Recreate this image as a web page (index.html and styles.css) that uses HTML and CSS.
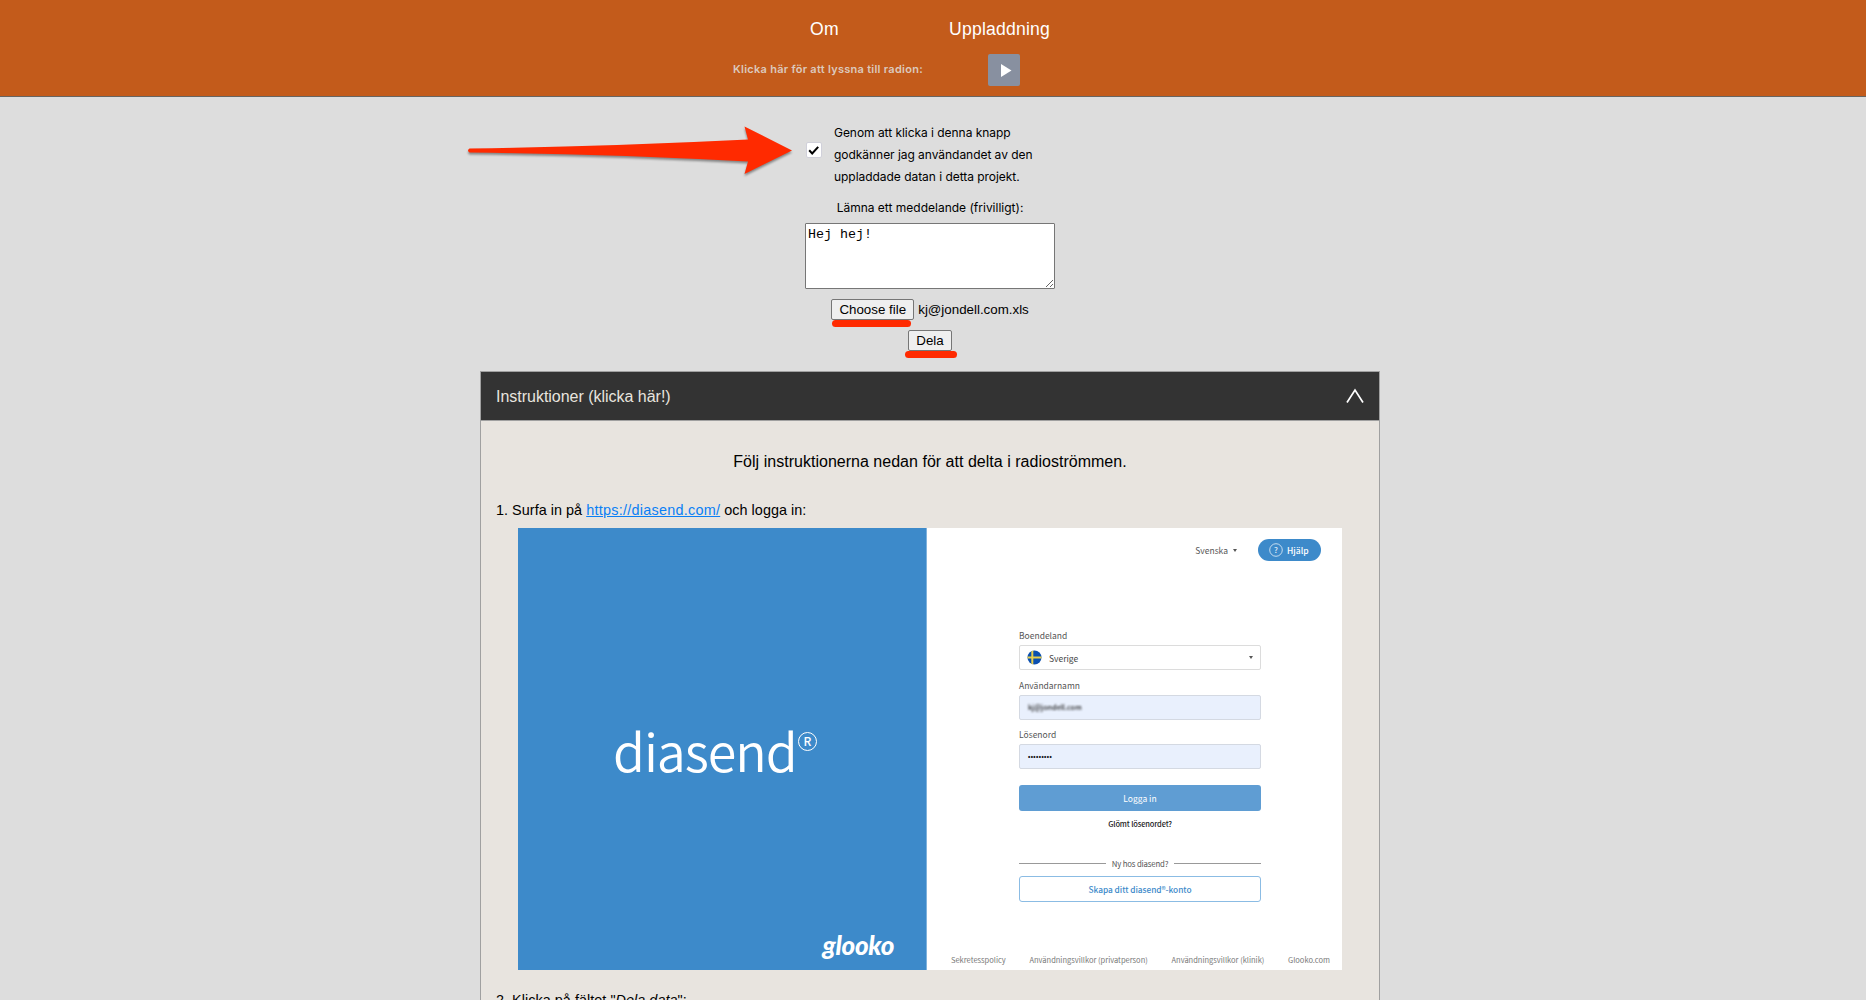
FILE: index.html
```html
<!DOCTYPE html>
<html lang="sv">
<head>
<meta charset="utf-8">
<title>Uppladdning</title>
<link rel="stylesheet" href="styles.css">
</head>
<body>
<header class="top">
  <nav class="nav"><a class="nav-about">Om</a><a class="nav-upload">Uppladdning</a></nav>
  <div class="radio">
    <span class="radio-text">Klicka här för att lyssna till radion:</span>
    <button class="play" aria-label="Play"><svg width="32" height="32" viewBox="0 0 32 32"><path d="M13 10v13l10.500-6.500z" fill="#fff"/></svg></button>
  </div>
</header>
<main>
  <form class="upload">
    <div class="consent">
      <span class="check"><svg width="16" height="16" viewBox="0 0 16 16"><path d="M3.200 8.300l3 3.200 6-6.700" fill="none" stroke="#000" stroke-width="2"/></svg></span>
      <p class="consent-text">Genom att klicka i denna knapp<br>godkänner jag användandet av den<br>uppladdade datan i detta projekt.</p>
      <svg class="arrow" width="340" height="64" viewBox="0 0 340 64"><path d="M11.500 22.500Q150 20.500 290 13.500L286.500 0.500L334 24.500L286.500 48L290 35.500Q150 28 11.500 26.500Q8.500 24.500 11.500 22.500Z" fill="#ff2a00"/></svg>
    </div>
    <label class="msg-label">Lämna ett meddelande (frivilligt):</label>
    <textarea class="msg">Hej hej!</textarea>
    <div class="file-row"><span class="marked"><button type="button" class="btn choose">Choose file</button><i class="stroke stroke-file"></i></span><span class="filename">kj@jondell.com.xls</span></div>
    <div class="send-row"><span class="marked"><button type="button" class="btn send">Dela</button><i class="stroke stroke-send"></i></span></div>
  </form>
  <section class="panel">
    <div class="panel-head"><span class="panel-title">Instruktioner (klicka här!)</span><svg width="20" height="18" viewBox="0 0 20 18"><path d="M2 15.500L10 3l8 12.500" fill="none" stroke="#fff" stroke-width="1.700"/></svg></div>
    <div class="panel-body">
      <p class="intro">Följ instruktionerna nedan för att delta i radioströmmen.</p>
      <p class="step">1. Surfa in på <a class="link">https://diasend.com/</a> och logga in:</p>
      <div class="shot">
        <div class="brand">
          <div class="logo">diasend<svg width="21" height="21" viewBox="0 0 21 21"><circle cx="10.500" cy="10.500" r="9" fill="none" stroke="#fff" stroke-width="1"/><text class="reg" x="10.500" y="14.800" text-anchor="middle" fill="#fff">R</text></svg></div>
          <div class="glooko">glooko</div>
        </div>
        <div class="login">
          <div class="tools"><span class="lang">Svenska</span><i class="caret"></i><span class="help"><svg width="14" height="14" viewBox="0 0 14 14"><circle cx="7" cy="7" r="6.300" fill="none" stroke="#fff" stroke-width=".7"/><text class="q" x="7" y="10" text-anchor="middle" fill="#fff">?</text></svg><span>Hjälp</span></span></div>
          <div class="fields">
            <div class="label">Boendeland</div>
            <div class="input country"><svg width="15" height="15" viewBox="0 0 15 15"><clipPath id="flag"><circle cx="7.500" cy="7.500" r="7"/></clipPath><g clip-path="url(#flag)"><path fill="#0b50b0" d="M0 0h15v15H0z"/><path fill="#e8cf4c" d="M4.300 0h2v15h-2zM0 6.500h15v2H0z"/></g></svg><span>Sverige</span><i class="caret"></i></div>
            <div class="label">Användarnamn</div>
            <div class="input filled"><span class="hidden-name">kj@jondell.com</span></div>
            <div class="label">Lösenord</div>
            <div class="input filled"><span class="dots">•••••••••</span></div>
            <div class="login-btn">Logga in</div>
            <div class="forgot">Glömt lösenordet?</div>
            <div class="divider"><span>Ny hos diasend?</span></div>
            <div class="create">Skapa ditt diasend®-konto</div>
          </div>
          <div class="foot"><span>Sekretesspolicy</span><span>Användningsvillkor (privatperson)</span><span>Användningsvillkor (klinik)</span><span>Glooko.com</span></div>
        </div>
      </div>
      <p class="step step-two">2. Klicka på fältet "<em>Dela data</em>":</p>
    </div>
  </section>
</main>
</body>
</html>
```
FILE: styles.css
```css
* { box-sizing: border-box; }
html { overflow: hidden; height: 1000px; }
body { margin: 0; height: 1000px; overflow: hidden; background: #ddd; color: #000; font-family: "Liberation Sans", Arial, sans-serif; }
p { margin: 0; }
button { padding: 0; }
.top { height: 97px; background: #c35b1b; border-bottom: 1px solid #686460; padding-top: 16px; }
.nav { display: flex; height: 26px; line-height: 26px; font-size: 17.600px; color: #fff; padding-left: 810px; }
.nav-about { width: 139px; letter-spacing: .3px; }
.nav-upload { letter-spacing: .2px; }
.radio { display: flex; align-items: center; justify-content: space-between; width: 287px; height: 32px; margin: 12px 0 0 733px; }
.radio-text { font: 600 11px/30px Inter, sans-serif; letter-spacing: .27px; color: #dcc9bd; padding-bottom: 3px; }
.play { width: 32px; height: 32px; border: 0; border-radius: 2px; background: #8890a0; }
.play svg { display: block; }
.upload { display: flex; flex-direction: column; align-items: center; width: 250px; margin: 25px auto 0 805px; height: 249px; }
.consent { position: relative; display: flex; align-items: center; width: 100%; height: 66px; }
.check { width: 16px; height: 16px; margin: 0 12px 11px 1px; border: 1px solid #d0d0da; border-radius: 2px; background: #fff; }
.check svg { display: block; margin: -1px; }
.consent-text { font: 12px/22px Inter, sans-serif; letter-spacing: -.04px; white-space: nowrap; }
.arrow { position: absolute; left: -347px; top: 4px; filter: drop-shadow(0 2px 1px rgba(0,0,0,.4)); }
.msg-label { font: 12px/22px Inter, sans-serif; margin: 9px 0 4px; }
.msg { display: block; flex: none; width: 250px; height: 66px; padding: 3px 2px 2px; border: 1px solid #767676; border-radius: 1px; background: #fff; font: 13.333px "Liberation Mono", monospace; }
.file-row { display: flex; align-items: center; height: 21px; margin-top: 10px; font-size: 13.333px; }
.filename { margin-left: 4px; }
.send-row { height: 21px; margin-top: 10px; }
.marked { position: relative; display: block; height: 21px; }
.btn { display: block; height: 21px; border: 1px solid #767676; border-radius: 2px; background: #efefef; color: #000; font: 13.333px "Liberation Sans", Arial, sans-serif; }
.choose { width: 83px; }
.send { width: 44px; }
.stroke { position: absolute; height: 7px; border-radius: 4px; background: #ff2a00; }
.stroke-file { left: 1px; top: 21px; width: 79px; }
.stroke-send { left: -3px; top: 21px; width: 52px; }
.panel { width: 900px; margin-left: 480px; height: 629px; border: 1px solid #a0a0a0; border-bottom: 0; background: #e8e4df; }
.panel-head { display: flex; align-items: center; justify-content: space-between; height: 49px; padding: 0 14px 0 15px; background: #333; border-bottom: 1px solid #a0a0a0; }
.panel-title { color: #e8e4df; font-size: 16px; letter-spacing: -.02px; padding-top: 2px; }
.panel-body { padding: 29px 0 0 15px; }
.intro { width: 868px; text-align: center; font-size: 16px; line-height: 24px; letter-spacing: .02px; }
.step { margin-top: 24px; font-size: 14.400px; line-height: 24px; white-space: pre; letter-spacing: .04px; }
.step .link { letter-spacing: .26px; }
.link { color: #0a7ff5; text-decoration: underline; }
.step-two { margin-top: 18px; }
.shot { display: flex; width: 824px; height: 442px; margin: 6px 0 0 22px; font-family: "Noto Sans CJK SC", sans-serif; }
.brand { display: flex; flex-direction: column; justify-content: space-between; width: 409px; background: #3d8aca; border-right: 1px solid #7fb2dd; color: #fff; }
.logo { display: flex; align-items: flex-start; gap: 0; margin: 183px 0 0 95px; font-size: 52px; font-weight: 350; line-height: 78px; letter-spacing: -1.050px; }
.logo svg { margin-top: 20px; }
.reg { font: 500 12px "Noto Sans CJK SC", sans-serif; letter-spacing: 0; }
.glooko { align-self: flex-end; margin: 0 32px 9px 0; font: italic 900 26px/32px Lato, sans-serif; letter-spacing: -.3px; }
.login { display: flex; flex-direction: column; flex: 1; background: #fff; color: #555; font-size: 8.500px; }
.tools { display: flex; align-items: center; height: 22px; margin: 11px 21px 0 0; justify-content: flex-end; }
.caret { border: 2.500px solid transparent; border-top: 3px solid #555; border-bottom: 0; margin: 1px 21px 0 5px; }
.help { display: flex; align-items: center; gap: 4px; width: 63px; height: 22px; padding-left: 11px; border-radius: 11px; background: #3d8aca; color: #fff; font-weight: 500; }
.q { font: 8px "Noto Sans CJK SC", sans-serif; }
.fields { width: 242px; margin: 66px 0 0 92px; }
.label { height: 17px; line-height: 17px; margin-bottom: 1px; }
.input { display: flex; align-items: center; height: 25px; margin-bottom: 6.500px; padding-left: 8px; border: 1px solid #dcdcdc; border-radius: 2px; }
.country { padding-left: 7px; color: #444; }
.country span { margin-left: 7px; flex: 1; }
.country .caret { margin: 0 7px 0 0; }
.filled { background: #e9f0fd; border-color: #d4d9e2; }
.hidden-name { color: #222; font-size: 7.200px; font-weight: 500; filter: blur(1.200px); }
.dots { color: #111; font: 700 6.500px "Liberation Sans", sans-serif; letter-spacing: .4px; }
.login-btn { height: 26px; margin-top: 16px; border-radius: 3px; background: #5f9dd3; color: #fff; line-height: 26px; text-align: center; }
.forgot { height: 26px; line-height: 26px; text-align: center; font-size: 7.500px; letter-spacing: -.15px; font-weight: 500; color: #222; }
.divider { display: flex; align-items: center; gap: 6px; height: 18px; margin: 17px 0 4px; font-size: 7.800px; letter-spacing: -.15px; }
.divider::before, .divider::after { content: ""; flex: 1; height: 1px; background: #999; }
.create { height: 26px; border: 1px solid #8bbce4; border-radius: 3px; line-height: 24px; text-align: center; color: #3d8aca; font-weight: 500; font-size: 8.300px; letter-spacing: -.03px; }
.foot { display: flex; justify-content: space-between; margin: auto 12px 4px 24px; line-height: 13px; font-size: 7.500px; color: #777; white-space: nowrap; }
```
